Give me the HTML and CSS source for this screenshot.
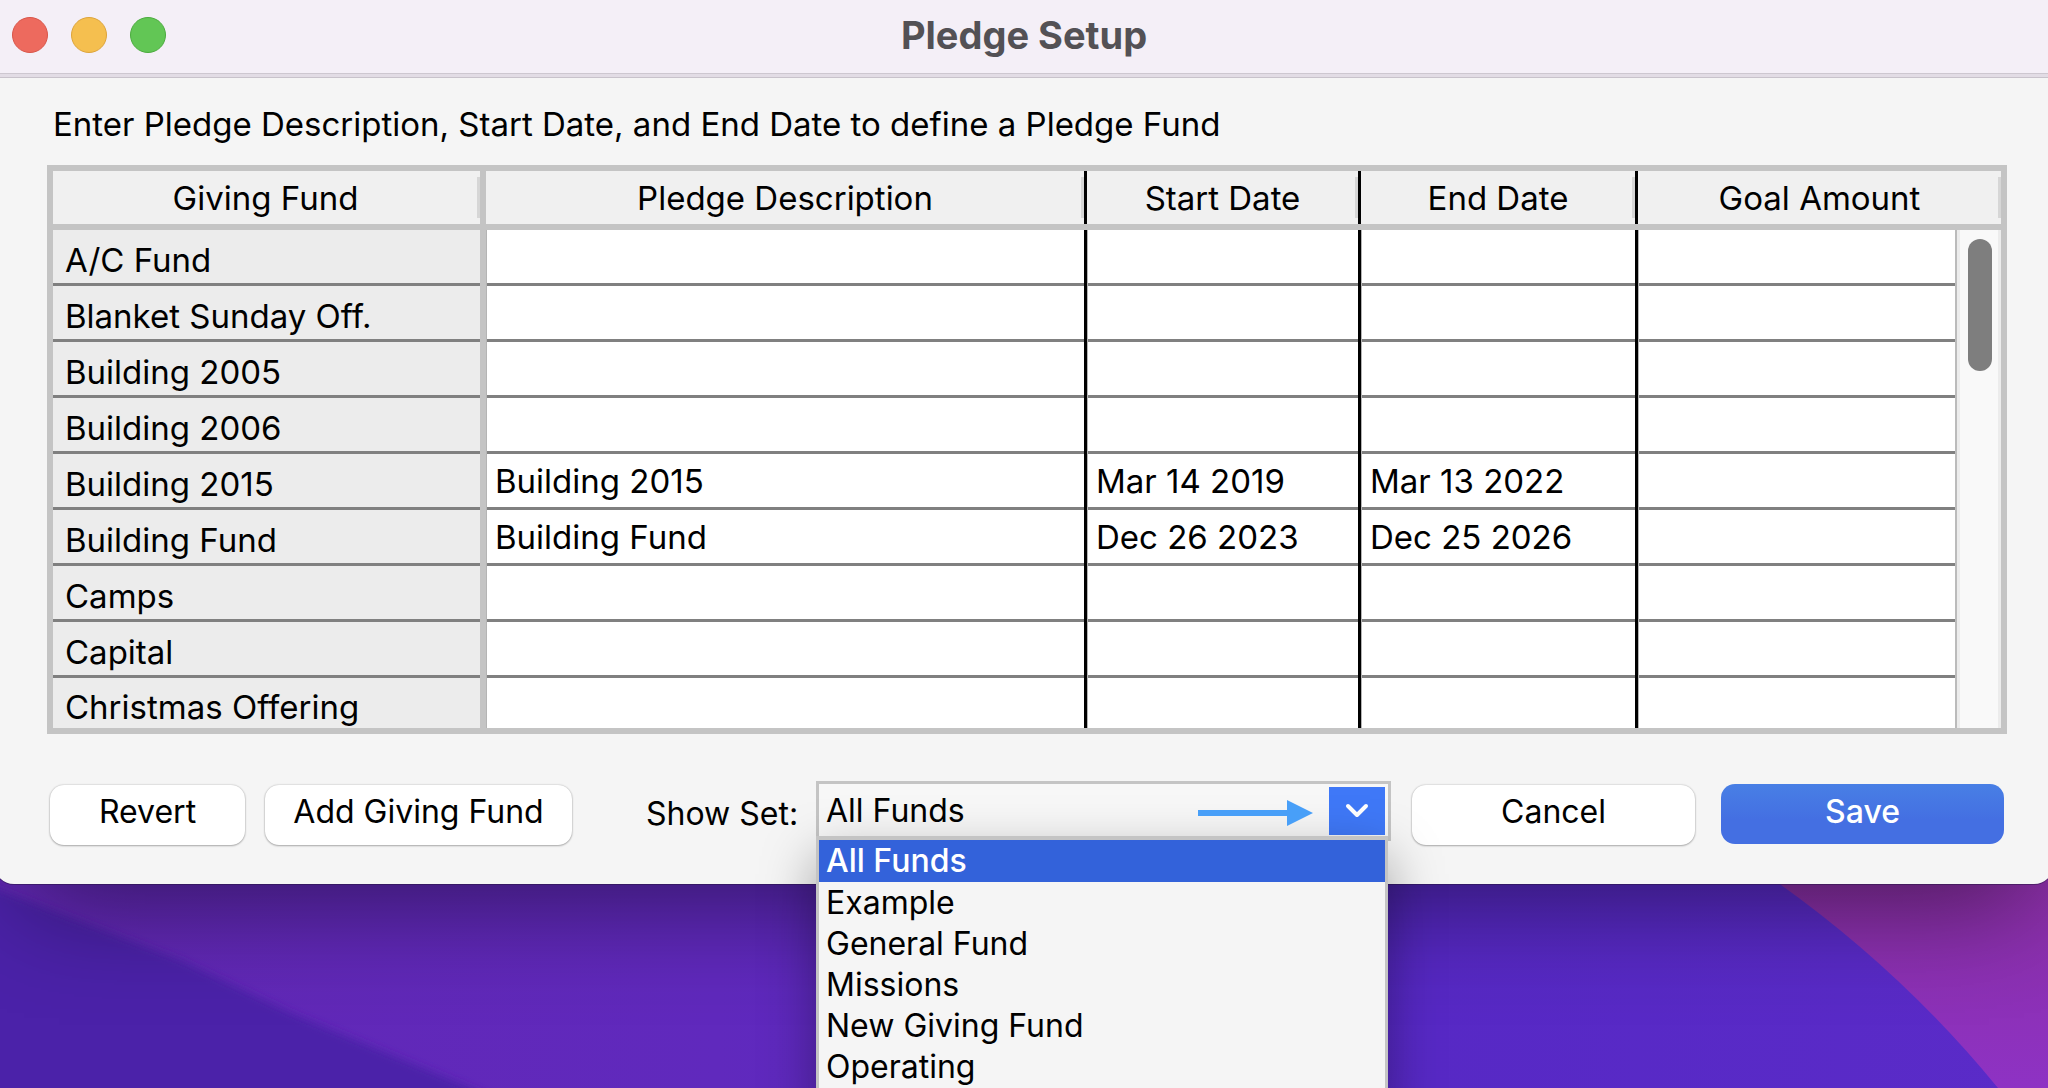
FILE: index.html
```html
<!DOCTYPE html>
<html lang="en">
<head>
  <meta charset="UTF-8"/>
  <meta name="viewport" content="width=device-width, initial-scale=1.0"/>
  <title>Pledge Setup</title>
  <link rel="stylesheet" href="styles.css">
</head>
<body>

  <svg class="wallpaper" viewBox="0 0 2048 1088" preserveAspectRatio="none" aria-hidden="true">
    <defs>
      <linearGradient id="base" x1="0" y1="0" x2="1" y2="0">
        <stop offset="0" stop-color="#6228b4"/>
        <stop offset="0.35" stop-color="#6029bd"/>
        <stop offset="0.6" stop-color="#5628c4"/>
        <stop offset="1" stop-color="#5a2bc8"/>
      </linearGradient>
      <linearGradient id="corner" x1="0" y1="0" x2="0" y2="1">
        <stop offset="0" stop-color="#8a2fa4"/>
        <stop offset="1" stop-color="#8e32c4"/>
      </linearGradient>
      <filter id="soft"><feGaussianBlur stdDeviation="4"/></filter>
    </defs>
    <rect width="2048" height="1088" fill="url(#base)"/>
    <path d="M-40 872 L0 890 L180 960 L293 1014 L471 1088 L520 1110 L-40 1128Z" fill="#4b22a9" filter="url(#soft)"/>
    <path d="M1770 877 Q1900 968 1998 1088 L2048 1088 L2048 870Z" fill="url(#corner)"/>
  </svg>

  <main class="window">
    <header class="titlebar">
      <div class="lights">
        <button class="light close" aria-label="Close"></button>
        <button class="light minimize" aria-label="Minimize"></button>
        <button class="light zoom" aria-label="Zoom"></button>
      </div>
      <h1>Pledge Setup</h1>
    </header>

    <div class="content">
      <p class="hint">Enter Pledge Description, Start Date, and End Date to define a Pledge Fund</p>

      <table class="funds">
        <colgroup>
          <col class="col-fund">
          <col class="col-desc">
          <col class="col-start">
          <col class="col-end">
          <col class="col-goal">
          <col class="col-scroll">
        </colgroup>
        <thead>
          <tr>
            <th scope="col">Giving Fund</th>
            <th scope="col">Pledge Description</th>
            <th scope="col">Start Date</th>
            <th scope="col">End Date</th>
            <th scope="col" colspan="2">Goal Amount</th>
          </tr>
        </thead>
        <tbody>
          <tr>
            <th scope="row">A/C Fund</th><td></td><td></td><td></td><td></td>
            <td class="scrollbar" rowspan="9"><div class="thumb"></div></td>
          </tr>
          <tr><th scope="row">Blanket Sunday Off.</th><td></td><td></td><td></td><td></td></tr>
          <tr><th scope="row">Building 2005</th><td></td><td></td><td></td><td></td></tr>
          <tr><th scope="row">Building 2006</th><td></td><td></td><td></td><td></td></tr>
          <tr><th scope="row">Building 2015</th><td>Building 2015</td><td>Mar 14 2019</td><td>Mar 13 2022</td><td></td></tr>
          <tr><th scope="row">Building Fund</th><td>Building Fund</td><td>Dec 26 2023</td><td>Dec 25 2026</td><td></td></tr>
          <tr><th scope="row">Camps</th><td></td><td></td><td></td><td></td></tr>
          <tr><th scope="row">Capital</th><td></td><td></td><td></td><td></td></tr>
          <tr><th scope="row">Christmas Offering</th><td></td><td></td><td></td><td></td></tr>
        </tbody>
      </table>

      <div class="actions">
        <button class="btn revert">Revert</button>
        <button class="btn add">Add Giving Fund</button>
        <label class="set-label" for="set">Show Set:</label>
        <div class="combo">
          <select id="set">
            <option selected>All Funds</option>
            <option>Example</option>
            <option>General Fund</option>
            <option>Missions</option>
            <option>New Giving Fund</option>
            <option>Operating</option>
          </select>
          <svg class="pointer" viewBox="0 0 116 26" aria-hidden="true">
            <path d="M0 10H89V0L115 13L89 26V16H0Z" fill="#489ff8"/>
          </svg>
          <span class="chevron">
            <svg viewBox="0 0 56 48" aria-hidden="true">
              <path d="M19 19L28 28L37 19" fill="none" stroke="#fff" stroke-width="4" stroke-linecap="round" stroke-linejoin="round"/>
            </svg>
          </span>
          <ul class="menu" role="listbox" aria-label="Show Set">
            <li role="option" aria-selected="true">All Funds</li>
            <li role="option">Example</li>
            <li role="option">General Fund</li>
            <li role="option">Missions</li>
            <li role="option">New Giving Fund</li>
            <li role="option">Operating</li>
          </ul>
        </div>
        <button class="btn cancel">Cancel</button>
        <button class="btn save">Save</button>
      </div>
    </div>
  </main>

</body>
</html>
```
FILE: styles.css
```css
* {
  box-sizing: border-box;
  margin: 0;
  padding: 0;
}

body {
  font-family: Inter, "Liberation Sans", sans-serif;
  font-size: 32px;
  line-height: 40px;
  color: #000;
  background: #5628c4;
  height: 100vh;
  overflow: hidden;
}

button,
select {
  font: inherit;
  color: inherit;
  border: none;
}

.wallpaper {
  position: absolute;
  inset: 0;
  width: 100%;
  height: 100%;
}

/* Window runs slightly past both sides of the screen */
.window {
  position: relative;
  margin: 0 -6px;
  background: #f5f5f5;
  border-radius: 0 0 20px 20px;
  box-shadow: 0 1px 0 rgba(40, 20, 70, 0.5), 0 50px 100px -30px rgba(0, 0, 0, 0.45);
}

/* Title bar */
.titlebar {
  display: grid;
  grid-template-columns: 1fr auto 1fr;
  align-items: center;
  height: 78px;
  padding: 0 18px 8px;
  background: #f4eff7;
  border-bottom: 1px solid #c8c2cb;
  box-shadow: inset 0 -3px 0 #e2dce5, inset 0 -4px 0 #cdc7d0;
}

.titlebar h1 {
  font-size: 38px;
  font-weight: 700;
  color: #535155;
}

.lights {
  display: flex;
  gap: 23px;
}

.light {
  width: 36px;
  height: 36px;
  border-radius: 50%;
}

.close { background: #ed6a5e; border: 1px solid #d95549; }
.minimize { background: #f5bf4f; border: 1px solid #dda43a; }
.zoom { background: #62c655; border: 1px solid #4bab3e; }

.content {
  padding: 26px 47px 39px 53px;
}

.hint {
  padding: 0 6px;
  margin-bottom: 21px;
  font-size: 33px;
}

/* Fund table */
.funds {
  width: 100%;
  table-layout: fixed;
  border: 6px solid #c4c4c4;
  border-collapse: separate;
  border-spacing: 0;
  background: #fff;
  font-size: 33px;
}

.col-fund { width: 433px; }
.col-start { width: 274px; }
.col-end { width: 277px; }
.col-goal { width: 319px; }
.col-scroll { width: 44px; }

.funds th {
  font-weight: 400;
  white-space: nowrap;
}

/* Column rule and the short resize tick beside it */
.funds thead th {
  height: 59px;
  padding-right: 3px;
  border-bottom: 6px solid #c4c4c4;
  background:
    linear-gradient(#000, #000) right 0 center / 3px 53px no-repeat,
    linear-gradient(#d6d6d6, #d6d6d6) right 3px center / 3px 41px no-repeat,
    #f0f0f0;
}

.funds thead th:first-child {
  padding-right: 8px;
  background:
    linear-gradient(#c4c4c4, #c4c4c4) right 0 center / 6px 53px no-repeat,
    linear-gradient(#d6d6d6, #d6d6d6) right 6px center / 3px 41px no-repeat,
    #f0f0f0;
}

.funds thead th:last-child {
  padding-right: 0;
  background: linear-gradient(#d6d6d6, #d6d6d6) right center / 3px 41px no-repeat #f0f0f0;
}

.funds tbody th,
.funds tbody td {
  height: 56px;
  background: linear-gradient(#808080, #808080) left bottom / 100% 3px no-repeat #fff;
}

.funds tbody th {
  padding: 4px 12px 0;
  text-align: left;
  background-color: #ececec;
  border-right: 6px solid #c4c4c4;
}

.funds tbody td {
  padding: 0 9px 3px;
  border-right: 3px solid #000;
  box-shadow: inset 1px 0 0 #b4b4b4;
}

.funds tbody td:nth-child(5) {
  border-right: 2px solid #bbb;
}

.funds tbody tr:last-child th,
.funds tbody tr:last-child td {
  height: 50px;
  background-image: none;
}

.funds tbody tr:last-child th {
  padding-top: 8px;
}

.funds tbody .scrollbar {
  padding: 9px 9px 0 11px;
  vertical-align: top;
  border: none;
  background: #f9f9f9;
  box-shadow: inset 3px 0 0 #ececec, inset -3px 0 0 #ececec;
}

.thumb {
  height: 132px;
  border-radius: 12px;
  background: #7e7e7e;
}

/* Bottom row */
.actions {
  display: flex;
  align-items: flex-end;
  padding: 47px 3px 0;
}

.btn {
  height: 60px;
  padding-bottom: 6px;
  border-radius: 14px;
  background: #fff;
  box-shadow: 0 0 2px rgba(0, 0, 0, 0.25), 0 1px 2px rgba(0, 0, 0, 0.25);
}

.revert {
  width: 195px;
  margin-right: 20px;
}

.add {
  width: 307px;
  margin-right: 74px;
}

.cancel,
.save {
  width: 283px;
}

.cancel {
  margin: 0 26px 0 21px;
}

.save {
  align-self: flex-start;
  margin-top: 3px;
  padding-bottom: 4px;
  color: #fff;
  font-weight: 500;
  background: linear-gradient(#487fe5, #446fe2 60%);
  box-shadow: none;
}

.set-label {
  width: 170px;
  padding-bottom: 11px;
  white-space: nowrap;
}

.combo {
  position: relative;
  flex: 1;
  padding-bottom: 4px;
}

.combo select {
  display: block;
  width: 100%;
  height: 60px;
  padding: 0 7px;
  appearance: none;
  border: 3px solid #c4c4c4;
  background: #f7f7f7;
}

.chevron {
  position: absolute;
  top: 6px;
  right: 6px;
  width: 56px;
  height: 48px;
  background: #3f78f7;
  pointer-events: none;
}

.chevron svg {
  display: block;
}

.pointer {
  position: absolute;
  top: 19px;
  right: 77px;
  z-index: 1;
  width: 116px;
  height: 26px;
}

.menu {
  position: absolute;
  top: 55px;
  left: 0;
  right: 3px;
  padding-bottom: 16px;
  list-style: none;
  line-height: 41px;
  background: #f5f5f5;
  border: 3px solid #c4c4c4;
  border-top-width: 4px;
  box-shadow: 0 20px 50px rgba(0, 0, 0, 0.35);
}

.menu li {
  padding: 0 7px;
}

.menu li[aria-selected="true"] {
  color: #fff;
  font-weight: 500;
  line-height: 42px;
  background: #3362da;
}
```
